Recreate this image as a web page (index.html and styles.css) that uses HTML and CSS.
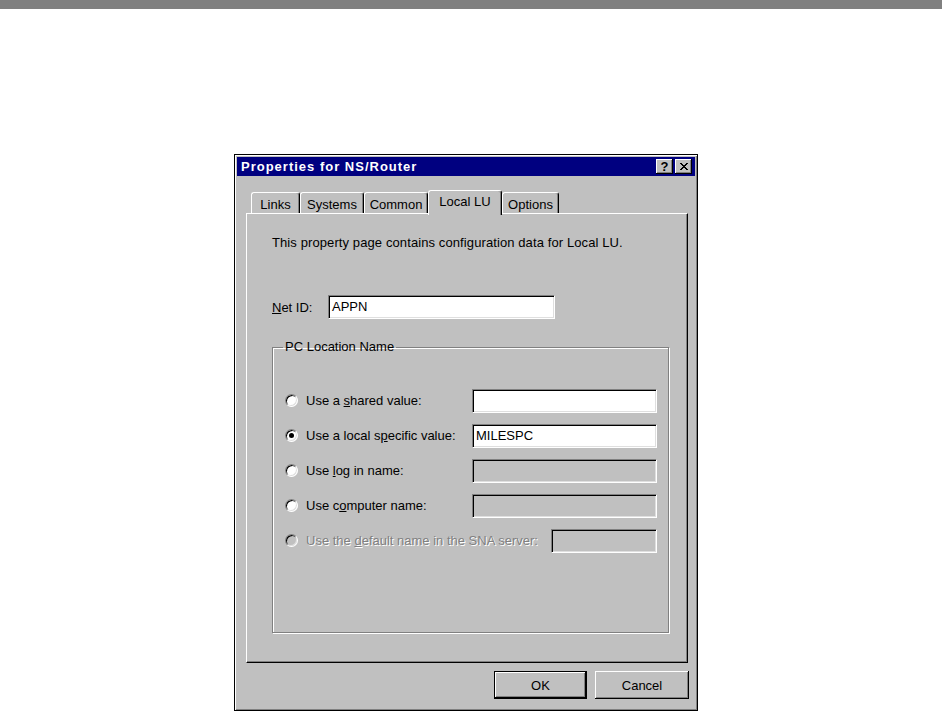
FILE: index.html
```html
<!DOCTYPE html>
<html lang="en">

<head>
    <meta charset="UTF-8">
    <title>Properties for NS/Router</title>
    <link rel="stylesheet" href="styles.css">
</head>

<body>
    <div class="topbar"></div>
    <div class="dialog">
        <div class="titlebar">
            <span class="title">Properties for NS/Router</span>
            <div class="caption-buttons">
                <button class="cap-btn help">?</button>
                <button class="cap-btn close">
                    <svg width="8" height="7" viewBox="0 0 8 7">
                        <path d="M0 0h2v1h1v1h2v-1h1v-1h2v1h-1v1h-1v1h-1v1h1v1h1v1h1v1h-2v-1h-1v-1h-2v1h-1v1h-2v-1h1v-1h1v-1h1v-1h-1v-1h-1v-1h-1z" fill="#000"/>
                    </svg>
                </button>
            </div>
        </div>

        <div class="tabs">
            <div class="tab w-links">Links</div>
            <div class="tab w-systems">Systems</div>
            <div class="tab w-common">Common</div>
            <div class="tab selected w-local">Local LU</div>
            <div class="tab w-options">Options</div>
        </div>

        <div class="panel">
            <p class="intro">This property page contains configuration data for Local LU.</p>

            <div class="netid">
                <label class="netid-label"><u>N</u>et ID:</label>
                <div class="edit netid-edit">APPN</div>
            </div>

            <fieldset class="group">
                <legend>PC Location Name</legend>
                <div class="row">
                    <span class="radio"></span>
                    <span class="rlabel">Use a <u>s</u>hared value:</span>
                    <div class="edit wide"></div>
                </div>
                <div class="row">
                    <span class="radio checked"></span>
                    <span class="rlabel">Use a local s<u>p</u>ecific value:</span>
                    <div class="edit wide">MILESPC</div>
                </div>
                <div class="row">
                    <span class="radio"></span>
                    <span class="rlabel">Use <u>l</u>og in name:</span>
                    <div class="edit wide off"></div>
                </div>
                <div class="row">
                    <span class="radio"></span>
                    <span class="rlabel">Use c<u>o</u>mputer name:</span>
                    <div class="edit wide off"></div>
                </div>
                <div class="row disabled">
                    <span class="radio"></span>
                    <span class="rlabel">Use the <u>d</u>efault name in the SNA server:</span>
                    <div class="edit narrow off"></div>
                </div>
            </fieldset>
        </div>

        <div class="actions">
            <button class="btn default">OK</button>
            <button class="btn">Cancel</button>
        </div>
    </div>
</body>

</html>
```

FILE: styles.css
```css
body {
    margin: 0;
    background: #ffffff;
    font-family: "Liberation Sans", Arial, sans-serif;
    font-size: 13px;
    color: #000000;
}

.topbar {
    height: 9px;
    background: #808080;
}

.dialog {
    margin: 145px 0 0 234px;
    width: 464px;
    height: 557px;
    box-sizing: border-box;
    background: #c0c0c0;
    border: 1px solid #000000;
    box-shadow: inset 1px 1px #ffffff, inset -1px -1px #808080;
    padding: 2px;
}

.titlebar {
    height: 19px;
    background: #000080;
    display: flex;
    align-items: center;
    justify-content: space-between;
    padding-left: 4px;
}

.title {
    color: #ffffff;
    font-weight: bold;
    font-size: 13px;
    letter-spacing: 1px;
}

.caption-buttons {
    display: flex;
    gap: 2px;
    margin-right: 3px;
}

.cap-btn {
    width: 17px;
    height: 15px;
    padding: 0;
    margin: 0;
    border: none;
    background: #c0c0c0;
    box-shadow: inset -1px -1px #000000, inset 1px 1px #ffffff, inset -2px -2px #808080;
    font-family: "Liberation Sans", Arial, sans-serif;
    font-weight: bold;
    font-size: 13px;
    line-height: 15px;
    display: flex;
    align-items: center;
    justify-content: center;
}

.tabs {
    display: flex;
    align-items: flex-end;
    height: 23px;
    margin: 14px 0 0 14px;
}

.tab {
    height: 21px;
    box-sizing: border-box;
    border-top: 1px solid #ffffff;
    border-left: 1px solid #ffffff;
    border-right: 1px solid #000000;
    border-radius: 3px 3px 0 0;
    box-shadow: inset -1px 0 #808080;
    text-align: center;
    line-height: 19px;
    padding-top: 2px;
}

.tab.selected {
    height: 25px;
    margin-bottom: -2px;
    position: relative;
    z-index: 1;
    background: #c0c0c0;
    padding-top: 2px;
    line-height: 17px;
}

.w-links { width: 49px; }
.w-systems { width: 64px; }
.w-common { width: 64px; }
.w-local { width: 74px; }
.w-options { width: 57px; }

.panel {
    margin: 0 7px 0 9px;
    height: 450px;
    box-sizing: border-box;
    border-top: 1px solid #ffffff;
    border-left: 1px solid #ffffff;
    border-right: 1px solid #000000;
    border-bottom: 1px solid #000000;
    box-shadow: inset -1px -1px #808080;
    padding: 22px 0 0 25px;
}

.intro {
    margin: 0;
    line-height: 14px;
    letter-spacing: 0.1px;
}

.netid {
    display: flex;
    align-items: center;
    margin-top: 45px;
}

.netid-label {
    width: 56px;
}

.edit {
    box-sizing: border-box;
    height: 24px;
    background: #ffffff;
    border-top: 1px solid #808080;
    border-left: 1px solid #808080;
    border-right: 1px solid #ffffff;
    border-bottom: 1px solid #ffffff;
    box-shadow: inset 1px 1px #000000, inset -1px -1px #dfdfdf;
    padding: 0 0 0 3px;
    line-height: 22px;
}

.netid-edit {
    width: 227px;
}

.group {
    margin: 20px 0 0 0;
    width: 397px;
    height: 294px;
    box-sizing: border-box;
    border: 1px solid #808080;
    box-shadow: inset 1px 1px #ffffff, 1px 1px #ffffff;
    padding: 34px 11px 0 12px;
}

.group legend {
    padding: 0 2px;
    margin-left: -2px;
    line-height: 16px;
}

.row {
    display: flex;
    align-items: center;
    height: 23px;
    margin-bottom: 12px;
}

.radio {
    width: 13px;
    height: 13px;
    box-sizing: border-box;
    border-radius: 50%;
    background: #ffffff;
    border: 1px solid;
    border-color: #808080 #ffffff #ffffff #808080;
    box-shadow: inset 1px 1px #000000, inset -1px -1px #dfdfdf;
    margin-right: 8px;
    display: flex;
    align-items: center;
    justify-content: center;
}

.radio.checked::after {
    content: "";
    width: 5px;
    height: 5px;
    border-radius: 50%;
    background: #000000;
}

.edit.wide {
    width: 185px;
    margin-left: auto;
}

.edit.narrow {
    width: 106px;
    margin-left: auto;
}

.edit.off {
    background: #c0c0c0;
}

.disabled .rlabel {
    color: #808080;
    text-shadow: 1px 1px #ffffff;
}

.disabled .radio {
    background: #c0c0c0;
}

.actions {
    display: flex;
    justify-content: flex-end;
    gap: 8px;
    margin: 8px 6px 0 0;
}

.btn {
    height: 28px;
    width: 94px;
    padding: 0;
    border: none;
    background: #c0c0c0;
    font-family: "Liberation Sans", Arial, sans-serif;
    font-size: 13px;
    color: #000000;
    box-shadow: inset -1px -1px #000000, inset 1px 1px #ffffff, inset -2px -2px #808080;
}

.btn.default {
    width: 93px;
    box-shadow: inset 0 0 0 1px #000000, inset -2px -2px #000000, inset 2px 2px #ffffff, inset -3px -3px #808080;
}
```
